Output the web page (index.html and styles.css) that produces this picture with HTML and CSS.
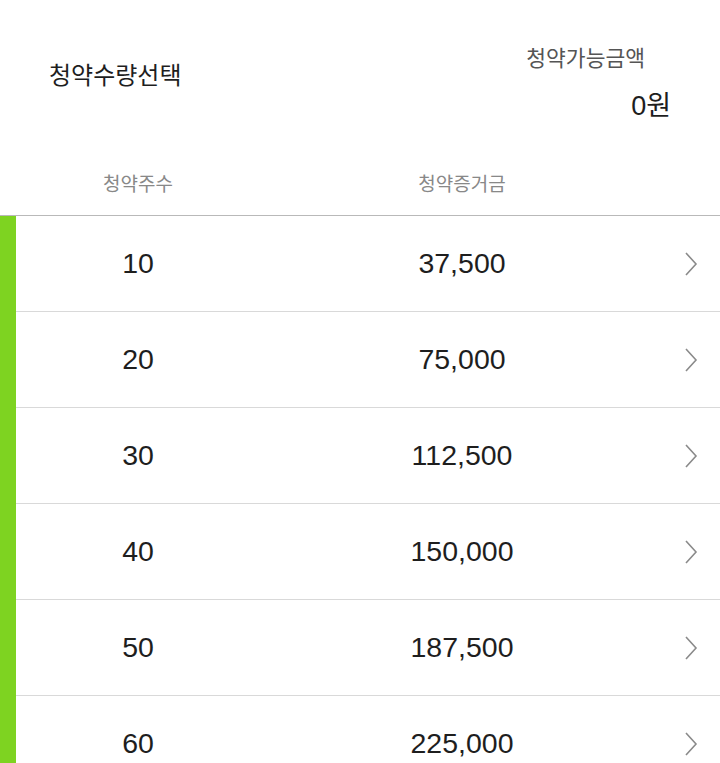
FILE: index.html
```html
<!DOCTYPE html>
<html lang="ko">
<head>
<meta charset="utf-8">
<link rel="stylesheet" href="styles.css">
</head>
<body>
<div class="page">
  <div class="top">
    <div class="title">청약수량선택</div>
    <div class="avail">
      <div class="avail-label">청약가능금액</div>
      <div class="avail-value">0원</div>
    </div>
  </div>
  <div class="head">
    <div class="col1">청약주수</div>
    <div class="col2">청약증거금</div>
    <div class="col3"></div>
  </div>
  <div class="list">
    <div class="bar"></div>
    <div class="rows">
      <div class="row"><div class="col1">10</div><div class="col2">37,500</div><div class="col3"><svg class="chev" viewBox="0 0 14 26" width="14" height="26"><polyline points="2,2 12,13 2,24"/></svg></div></div>
      <div class="row"><div class="col1">20</div><div class="col2">75,000</div><div class="col3"><svg class="chev" viewBox="0 0 14 26" width="14" height="26"><polyline points="2,2 12,13 2,24"/></svg></div></div>
      <div class="row"><div class="col1">30</div><div class="col2">112,500</div><div class="col3"><svg class="chev" viewBox="0 0 14 26" width="14" height="26"><polyline points="2,2 12,13 2,24"/></svg></div></div>
      <div class="row"><div class="col1">40</div><div class="col2">150,000</div><div class="col3"><svg class="chev" viewBox="0 0 14 26" width="14" height="26"><polyline points="2,2 12,13 2,24"/></svg></div></div>
      <div class="row"><div class="col1">50</div><div class="col2">187,500</div><div class="col3"><svg class="chev" viewBox="0 0 14 26" width="14" height="26"><polyline points="2,2 12,13 2,24"/></svg></div></div>
      <div class="row"><div class="col1">60</div><div class="col2">225,000</div><div class="col3"><svg class="chev" viewBox="0 0 14 26" width="14" height="26"><polyline points="2,2 12,13 2,24"/></svg></div></div>
    </div>
  </div>
</div>
</body>
</html>
```
FILE: styles.css
```css
html, body {
  margin: 0;
  padding: 0;
  background: #fff;
  overflow: hidden;
}
body {
  font-family: "Liberation Sans", "Noto Sans CJK KR", sans-serif;
  color: #222;
}
.page {
  width: 720px;
  height: 763px;
  overflow: hidden;
}
.top {
  height: 150px;
  display: flex;
  justify-content: space-between;
  align-items: flex-start;
}
.title {
  margin-top: 61px;
  margin-left: 49px;
  font-size: 24px;
  line-height: 30px;
  color: #1e1e1e;
}
.avail {
  display: flex;
  flex-direction: column;
  align-items: flex-end;
  margin-top: 45px;
  margin-right: 49px;
}
.avail-label {
  font-size: 21.5px;
  line-height: 28px;
  color: #555;
  margin-right: 26px;
}
.avail-value {
  margin-top: 17px;
  font-size: 27px;
  line-height: 32px;
  color: #1e1e1e;
}
.head {
  height: 65px;
  border-bottom: 1px solid #b9b9b9;
  display: grid;
  grid-template-columns: 276px 372px 72px;
  align-items: center;
  font-size: 19px;
  color: #888;
  text-align: center;
}
.list {
  display: flex;
}
.bar {
  width: 16px;
  background: #7ed321;
  flex: none;
}
.rows {
  flex: 1;
}
.row {
  height: 95px;
  border-bottom: 1px solid #d9d9d9;
  display: grid;
  grid-template-columns: 244px 404px 56px;
  align-items: center;
  text-align: center;
  font-size: 28.5px;
  color: #1e1e1e;
}
.col3 {
  display: flex;
  justify-content: center;
  align-items: center;
}
.chev {
  display: block;
  margin-left: -2px;
}
.chev polyline {
  fill: none;
  stroke: #8a8a8a;
  stroke-width: 1.6;
}
```
